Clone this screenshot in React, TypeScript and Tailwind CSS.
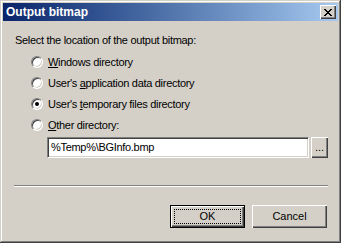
const font = { fontFamily: '"Liberation Sans", Arial, sans-serif' }

function Radio({ checked = false }: { checked?: boolean }) {
  return (
    <div className="w-[12px] h-[12px] rounded-full border border-t-[#808080] border-l-[#808080] border-r-white border-b-white bg-white shadow-[inset_1px_1px_#404040,inset_-1px_-1px_#d4d0c8] flex items-center justify-center shrink-0">
      {checked && <div className="w-[4px] h-[4px] rounded-full bg-black" />}
    </div>
  )
}

function Option({ children, checked }: { children: React.ReactNode; checked?: boolean }) {
  return (
    <div className="h-[21px] flex items-start pt-[4px] pl-[17px]">
      <Radio checked={checked} />
      <span className="ml-[5px] text-[11px] leading-[13px] tracking-[-0.3px] text-black">{children}</span>
    </div>
  )
}

function Button({ children, isDefault = false }: { children: React.ReactNode; isDefault?: boolean }) {
  if (isDefault) {
    return (
      <div className="w-[75px] h-[23px] border border-black bg-[#d4d0c8] shadow-[inset_1px_1px_#ffffff,inset_-1px_-1px_#404040,inset_-2px_-2px_#808080] p-[3px]">
        <div className="w-full h-full border border-dotted border-black flex items-center justify-center text-[11px] leading-[13px] text-black">
          {children}
        </div>
      </div>
    )
  }
  return (
    <div className="w-[75px] h-[23px] bg-[#d4d0c8] shadow-[inset_1px_1px_#ffffff,inset_-1px_-1px_#404040,inset_-2px_-2px_#808080] flex items-center justify-center text-[11px] leading-[13px] text-black">
      {children}
    </div>
  )
}

export default function App() {
  return (
    <div
      style={font}
      className="w-[341px] h-[243px] bg-[#d4d0c8] p-[3px] shadow-[inset_-1px_-1px_#404040,inset_1px_1px_#d4d0c8,inset_-2px_-2px_#808080,inset_2px_2px_#ffffff] flex flex-col"
    >
      {/* Title bar */}
      <div className="h-[18px] bg-gradient-to-r from-[#0a246a] to-[#a6caf0] flex items-center pl-[3px] pr-[2px]">
        <span className="flex-1 text-white font-bold text-[12px] leading-[14px]">Output bitmap</span>
        <div className="w-[16px] h-[14px] bg-[#d4d0c8] shadow-[inset_1px_1px_#ffffff,inset_-1px_-1px_#404040,inset_-2px_-2px_#808080] flex items-center justify-center">
          <svg width="8" height="7" viewBox="0 0 8 7" shapeRendering="crispEdges">
            <path d="M0 0h2v1h-2zM6 0h2v1h-2zM1 1h2v1h-2zM5 1h2v1h-2zM2 2h4v1h-4zM3 3h2v1h-2zM2 4h4v1h-4zM1 5h2v1h-2zM5 5h2v1h-2zM0 6h2v1h-2zM6 6h2v1h-2z" fill="#000" />
          </svg>
        </div>
      </div>

      {/* Body */}
      <div className="flex flex-col pl-[11px] pr-[10px]">
        <div className="mt-[13px] ml-[1px] text-[11px] leading-[13px] tracking-[-0.3px] text-black">
          Select the location of the output bitmap:
        </div>
        <div className="mt-[5px] flex flex-col">
          <Option>
            <u>W</u>indows directory
          </Option>
          <Option>
            User's <u>a</u>pplication data directory
          </Option>
          <Option checked>
            User's <u>t</u>emporary files directory
          </Option>
          <Option>
            <u>O</u>ther directory:
          </Option>
        </div>
        <div className="mt-[1px] ml-[33px] flex items-start gap-[2px]">
          <div className="w-[262px] h-[21px] bg-white border border-t-[#808080] border-l-[#808080] border-r-white border-b-white shadow-[inset_1px_1px_#404040,inset_-1px_-1px_#d4d0c8] flex items-center pl-[3px] text-[11px] leading-[13px] tracking-[-0.3px] text-black">
            %Temp%\BGInfo.bmp
          </div>
          <div className="w-[17px] h-[21px] bg-[#d4d0c8] shadow-[inset_1px_1px_#ffffff,inset_-1px_-1px_#404040,inset_-2px_-2px_#808080] flex items-end justify-center pb-[5px] text-[11px] leading-[11px] text-black">
            ...
          </div>
        </div>
        <div className="mt-[27px] h-[2px] border-t border-t-[#808080] border-b border-b-white" />
        <div className="mt-[18px] flex justify-end gap-[7px] pr-[1px]">
          <Button isDefault>OK</Button>
          <Button>Cancel</Button>
        </div>
      </div>
    </div>
  )
}
